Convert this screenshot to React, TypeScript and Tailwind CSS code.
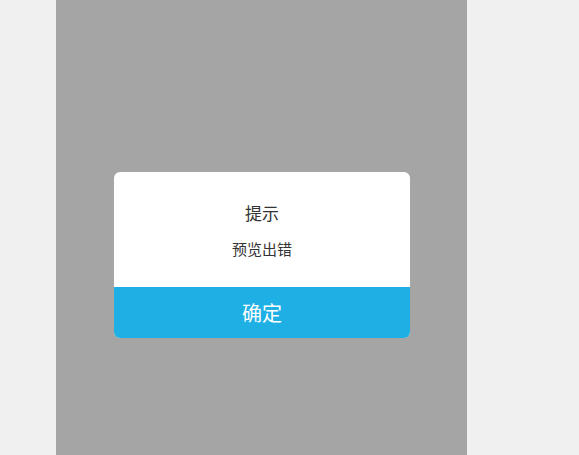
export default function App() {
  return (
    <div
      className="flex h-[455px] w-[579px] bg-[#f0f0f0]"
      style={{ fontFamily: '"Noto Sans CJK SC", "Noto Sans", sans-serif' }}
    >
      <div className="ml-[56px] h-full w-[411px] bg-[#a5a5a5] pl-[58px] pt-[172px]">
        <div className="flex w-[296px] flex-col overflow-hidden rounded-[6px] bg-white">
          <div className="flex h-[115px] flex-col items-center">
            <div className="mt-[29px] text-[17px] leading-[24px] text-[#333]">提示</div>
            <div className="mt-[13px] text-[15px] leading-[22px] text-[#333]">预览出错</div>
          </div>
          <div className="flex h-[51px] items-center justify-center bg-[#1eb0e4] text-[20px] text-white">
            确定
          </div>
        </div>
      </div>
    </div>
  );
}
